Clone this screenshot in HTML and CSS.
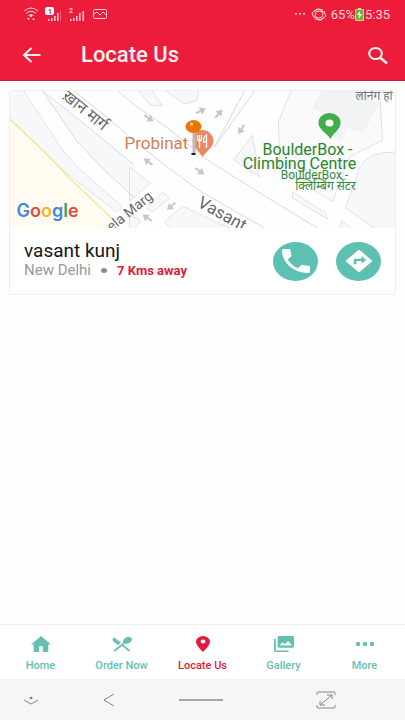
FILE: index.html
```html
<!DOCTYPE html>
<html lang="en">
<head>
<meta charset="utf-8">
<meta name="viewport" content="width=device-width, initial-scale=1">
<title>Locate Us</title>
<link rel="stylesheet" href="styles.css">
</head>
<body>
<header class="header">
  <div class="status">
    <div class="status-group status-left">
      <svg width="16" height="14" viewBox="0 0 16 14" fill="none" stroke="currentColor"><path d="M1 4Q8-2 15 4M3 6.500Q8 2 13 6.500M5.500 8.500Q8 6.500 10.500 8.500"/><path d="M8 8v2" stroke-width="2"/><path d="M4 11h3l-1.500 2zM9 13h3l-1.500-2z" fill="currentColor" stroke="none"/></svg>
      <svg width="18" height="15" viewBox="0 0 18 15"><path d="M3 12h1.500v2H3zM6 11h1.500v3H6zM9 9h1.500v5H9zM12 6h1.500v8H12z" fill="currentColor"/><path d="M15 4h1v10h-1z" fill="currentColor" opacity=".4"/><rect width="9" height="8" rx="2" fill="#fff"/><text class="sim sim-one" x="3" y="7">1</text></svg>
      <svg width="16" height="15" viewBox="0 0 16 15" fill="currentColor"><path d="M1 12h1.500v2H1zM4 11h1.500v3H4zM7 9h1.500v5H7zM10 6h1.500v8H10zM13.500 4H15v10h-1.500z"/><text class="sim" x="0" y="6">2</text></svg>
      <svg class="status-picture" width="14" height="10" viewBox="0 0 14 10" fill="none" stroke="currentColor"><rect x=".5" y=".5" width="13" height="9" rx="1"/><path d="M1 5l3-2 3 3 3-3 3 3"/></svg>
    </div>
    <div class="status-group">
      <svg class="status-dots" width="10" height="2" viewBox="0 0 10 2" fill="currentColor"><path d="M0 0h2v1.500H0zM4 0h2v1.500H4zM8 0h2v1.500H8z"/></svg>
      <svg class="status-eye" width="16" height="13" viewBox="0 0 16 13" fill="none" stroke="currentColor"><ellipse cx="8" cy="6.500" rx="4" ry="3.500"/><path d="M1 5l5-4 6 1M3 3l5-2 6 4M15 8l-5 4-6-1M13 10l-5 2-6-4M1 5l2 5M15 8l-2-5"/></svg>
      <span>65%</span>
      <svg width="9" height="13" viewBox="0 0 9 13"><rect x="3" width="3" height="2" fill="#ddd"/><rect x=".5" y="1.500" width="8" height="11" fill="#69b82f" stroke="#d8c5a2"/><path d="M5 3L2 7h2l-.5 4L7 6H5z" fill="#fff"/></svg>
      <span class="clock">5:35</span>
    </div>
  </div>
  <div class="toolbar">
    <button class="icon-button" type="button" aria-label="Back"><svg width="20" height="16" viewBox="0 0 20 16" fill="none" stroke="currentColor" stroke-width="2"><path d="M18.500 8H2M9.500 1L2 8l7.500 7"/></svg></button>
    <h1 class="title">Locate Us</h1>
    <button class="icon-button" type="button" aria-label="Search"><svg width="20" height="17" viewBox="0 0 20 17" fill="none" stroke="currentColor" stroke-width="2"><ellipse cx="7.500" cy="6.500" rx="6.300" ry="5.500"/><path d="M12 10.500l7 6" stroke-width="2.600"/></svg></button>
  </div>
</header>

<main class="content">
  <article class="card">
    <svg class="map" viewBox="0 0 386 137" preserveAspectRatio="xMidYMid slice" role="img" aria-label="Map of Vasant Kunj">
      <defs><path id="arrow" d="M-5-1H0V-4L6 0 0 4V1H-5z"/></defs>
      <rect width="386" height="137" fill="#fefefe"/>
      <path d="M0 28L57 84 110 137H0z" fill="#fffbf0"/>
      <g fill="#f6f8fa" stroke="#e0e2e4">
        <path d="M-2-2L14 0 53 59 70 78 113 116 107 121 57 82 35 61-2 25z"/>
        <path d="M33 0L60 21 125 74 125 106 94 78 68 51z" stroke="none"/>
        <path d="M125 74L155 96 125 106z" fill="#fefefe" stroke="none"/>
        <path d="M128-1L141 14 153 15 142-1zM155-1L175 13 188 9 189-1zM243 44L224 69 250 86zM120 76L141 92 125 106 120 110zM137 117L153 101 160 107 143 121zM173 115L155 131 162 138H222zM120 124L131 130 125 138H120z"/>
        <path d="M282-2L269 31 270 77 323 111 340 66 373 49 370-2z" fill="#fafafb"/>
        <path d="M313-1L304 17 318 25 311 37 331 50 337 36 354 40 369 12 354 7 358-1z" stroke="#f0f0f0" fill="#f2f3f4"/>
        <path d="M387 61Q358 60 350 77L336 117 366 138H387zM283 101L316 122 318 128 283 107zM332 130L343 138H330z"/>
      </g>
      <path d="M0 28L35 61 57 84 103 128" fill="none" stroke="#eee99b" stroke-width="1.500"/>
      <g fill="none" stroke="#d9d9d6">
        <path d="M108 0L125 14 158 37 198 69 260 108 308 137M65 0L97 26 125 50 155 74 192 101 255 137"/>
        <path d="M33 0L68 51 94 78 125 107M33 0L60 21 125 74M245 0L205 56M235 0L205 56"/>
      </g>
      <g fill="#c3c6d4">
        <use href="#arrow" transform="translate(191 20) rotate(-25)"/>
        <use href="#arrow" transform="translate(209 23) rotate(-50)"/>
        <use href="#arrow" transform="translate(232 38) rotate(125)"/>
        <use href="#arrow" transform="translate(139 27) rotate(35)"/>
        <use href="#arrow" transform="translate(139 71) rotate(215)"/>
        <use href="#arrow" transform="translate(190 80) rotate(35)"/>
        <use href="#arrow" transform="translate(162 115) rotate(140)"/>
        <use href="#arrow" transform="translate(138 127) rotate(215)"/>
      </g>
      <text class="road road-hindi" transform="translate(52 7) rotate(39)">ख़ान मार्ग</text>
      <text class="road" transform="translate(102 141) rotate(-39)">ela Marg</text>
      <text class="road road-large" transform="translate(187 115) rotate(29)">Vasant</text>
      <text class="poi poi-food" x="115" y="58">Probinat</text>
      <path d="M193 39a11 11 0 0 1 11 11c0 6-7 10-11 16-3-6-10-10-10-16a10 11 0 0 1 10-11z" fill="#e98861"/>
      <path d="M188 44v4q0 2 2 2v7M190 44v6M192 44v4q0 2-2 2M197 57V44q-3 1-3 7h3" fill="none" stroke="#fff" stroke-width="1.300"/>
      <path d="M183 40h3v24h-3z" fill="#bcbcbc"/><path d="M182 62h4v2h-4z" fill="#222"/>
      <ellipse cx="184" cy="35.500" rx="8" ry="6.500" fill="#e87605"/><circle cx="182" cy="33" r="1.500" fill="#ffdca9"/>
      <path d="M320 22a11 9.500 0 0 1 11 10c0 7-8 10-10 16-3-6-12-9-12-16a11 9.500 0 0 1 11-10z" fill="#42ad49"/><ellipse cx="320" cy="32" rx="4" ry="3.500" fill="#fff"/>
      <g class="poi poi-park" text-anchor="middle"><text x="298" y="64">BoulderBox -</text><text x="290" y="78">Climbing Centre</text></g>
      <g class="poi poi-local" text-anchor="middle"><text x="305" y="88">BoulderBox -</text><text x="316" y="99">क्लिम्बिंग सेंटर</text></g>
      <text class="poi poi-hotel" x="346" y="9">लर्निंग हो</text>
      <text class="google" x="7" y="126"><tspan fill="#4285e8">G</tspan><tspan fill="#df4b3d">o</tspan><tspan fill="#edb820">o</tspan><tspan fill="#4285e8">g</tspan><tspan fill="#35a454">l</tspan><tspan fill="#df4b3d">e</tspan></text>
    </svg>
    <div class="details">
      <div class="place">
        <h2 class="name">vasant kunj</h2>
        <p class="meta"><span>New Delhi</span><i class="dot"></i><strong class="distance">7 Kms away</strong></p>
      </div>
      <button class="action" type="button" aria-label="Call"><svg width="28" height="24" viewBox="3 3 18 18" preserveAspectRatio="none" fill="currentColor"><path d="M6.620 10.790c1.440 2.830 3.760 5.140 6.590 6.590l2.200-2.200c.27-.27.67-.36 1.020-.24 1.120.37 2.330.57 3.570.57.550 0 1 .45 1 1V20c0 .55-.45 1-1 1C10.610 21 3 13.390 3 4c0-.55.45-1 1-1h3.500c.55 0 1 .45 1 1 0 1.250.2 2.450.57 3.570.11.35.03.74-.25 1.020z"/></svg></button>
      <button class="action" type="button" aria-label="Directions"><svg width="26" height="22" viewBox="2 2 20 20" preserveAspectRatio="none" fill="currentColor"><path d="M21.700 11.300l-9-9a1 1 0 0 0-1.400 0l-9 9a1 1 0 0 0 0 1.400l9 9a1 1 0 0 0 1.400 0l9-9a1 1 0 0 0 0-1.400zM14 14.500V12h-4v3H8v-4c0-.55.45-1 1-1h5V7.500l3.500 3.500z"/></svg></button>
    </div>
  </article>
</main>

<nav class="tabs" aria-label="Main">
  <a class="tab" href="#home"><svg width="20" height="16" viewBox="1 3 22 17" preserveAspectRatio="none" fill="currentColor"><path d="M10 20v-6h4v6h6v-8h3L12 3 1 12h3v8z"/></svg>Home</a>
  <a class="tab" href="#order"><svg width="20" height="16" viewBox="2 2 20 20" preserveAspectRatio="none" fill="currentColor"><path d="M8.100 13.340l2.830-2.830L3.910 3.500a4 4 0 0 0 0 5.660zM14.880 11.530c1.530.71 3.680.21 5.270-1.380 1.910-1.910 2.280-4.650.81-6.120-1.460-1.460-4.200-1.100-6.120.81-1.590 1.590-2.090 3.740-1.380 5.270L3.700 19.870l1.410 1.410L12 14.410l6.880 6.880 1.410-1.410L13.410 13z"/></svg>Order Now</a>
  <a class="tab tab-current" href="#locate" aria-current="page"><svg width="14" height="16" viewBox="5 2 14 20" preserveAspectRatio="none" fill="currentColor"><path d="M12 2a7 7 0 0 0-7 7c0 5.250 7 13 7 13s7-7.750 7-13a7 7 0 0 0-7-7zm0 9.500a2.500 2.500 0 1 1 0-5 2.500 2.500 0 0 1 0 5z"/></svg>Locate Us</a>
  <a class="tab" href="#gallery"><svg width="20" height="16" viewBox="1 1 22 22" preserveAspectRatio="none" fill="currentColor"><path d="M1 5h2v16h14v2H3a2 2 0 0 1-2-2zM7 1h14a2 2 0 0 1 2 2v12a2 2 0 0 1-2 2H7a2 2 0 0 1-2-2V3a2 2 0 0 1 2-2zm0 13h14l-4.500-6-3.500 4.500L10.500 9.500z"/></svg>Gallery</a>
  <a class="tab" href="#more"><svg width="20" height="16" viewBox="0 0 20 16" fill="currentColor"><circle cx="3" cy="8" r="2.200"/><circle cx="10" cy="8" r="2.200"/><circle cx="17" cy="8" r="2.200"/></svg>More</a>
</nav>

<footer class="system">
  <svg width="16" height="12" viewBox="0 0 16 12" fill="none" stroke="currentColor"><path d="M1 6l7 4 7-4"/><ellipse cx="8" cy="4" rx="1.500" ry="1.200" fill="currentColor" stroke="none"/></svg>
  <svg width="12" height="14" viewBox="0 0 12 14" fill="none" stroke="currentColor"><path d="M11 1L1 7l10 6"/></svg>
  <svg class="handle" width="46" height="4" viewBox="0 0 46 4" fill="none" stroke="currentColor" stroke-width="2"><path d="M1 2h44"/></svg>
  <svg class="expand" width="20" height="18" viewBox="0 0 20 18" fill="none" stroke="currentColor"><path d="M1 4V2q0-1 1-1h16q1 0 1 1v2M1 14v2q0 1 1 1h16q1 0 1-1v-2M4 14L16 4M11 4h5v4M4 10v4h5"/></svg>
</footer>
</body>
</html>
```
FILE: styles.css
```css
* { box-sizing: border-box; }

body {
  margin: 0;
  min-height: 100vh;
  display: flex;
  flex-direction: column;
  background: #fefefe;
  font-family: Roboto, "Noto Sans", sans-serif;
}

h1, h2, p { margin: 0; }
svg { display: block; flex: none; }

button {
  padding: 0;
  border: 0;
  background: none;
  color: inherit;
}

.header {
  background: #ed1c3a;
  border-bottom: 1px solid #cc2038;
  color: #fff0f2;
}

.status {
  display: flex;
  justify-content: space-between;
  align-items: center;
  height: 28px;
  padding: 0 15px 0 23px;
  font-size: 13px;
  color: #ffd3d9;
}

.status-group { display: flex; align-items: center; }
.status-left { gap: 6px; }
.status-picture { margin-left: 2px; }
.status-dots { margin-right: 6px; }
.status-eye { margin-right: 4px; }
.clock { margin-left: 1px; }
.sim { font-size: 7px; font-weight: 700; }
.sim-one { fill: #c01f37; }

.toolbar {
  display: flex;
  align-items: center;
  height: 52px;
  padding: 2px 17px 0 22px;
}

.title {
  flex: 1;
  margin-left: 39px;
  font-size: 22px;
  line-height: 28px;
  font-weight: 500;
}

.content { flex: 1; padding: 9px; }

.card {
  overflow: hidden;
  border: 1px solid #eeeeee;
  border-radius: 3px;
  background: #fff;
}

.map { width: 100%; height: 137px; }
.road { font-size: 14px; fill: #65686b; }
.road-hindi { font-size: 16px; }
.road-large { font-size: 17px; }
.poi { font-size: 16px; }
.poi-food { font-size: 17px; fill: #cf8059; }
.poi-park { fill: #28852c; }
.poi-local { font-size: 12px; fill: #398a3d; }
.poi-hotel { font-size: 12px; fill: #73777b; }
.google { font-family: Inter, sans-serif; font-size: 18px; font-weight: 600; }

.details {
  display: flex;
  align-items: center;
  gap: 18px;
  height: 66px;
  padding: 0 14px;
}

.place { flex: 1; padding-bottom: 2px; }

.name {
  font-size: 19px;
  line-height: 21px;
  font-weight: 400;
  color: #151515;
}

.meta {
  display: flex;
  align-items: center;
  font-size: 15px;
  line-height: 19px;
  color: #999;
}

.dot {
  width: 6px;
  height: 5px;
  margin: 0 10px;
  border-radius: 50%;
  background: #8b8b8b;
}

.distance { font-size: 13px; color: #db1c3b; }

.action {
  display: grid;
  place-items: center;
  width: 45px;
  height: 39px;
  border-radius: 50%;
  background: #5dc1b2;
  color: #fff;
}

.tabs {
  display: flex;
  height: 55px;
  border-top: 1px solid #f0f0f0;
  background: #fff;
}

.tab {
  flex: 1;
  display: flex;
  flex-direction: column;
  align-items: center;
  gap: 7px;
  padding-top: 11px;
  font-size: 11px;
  line-height: 14px;
  font-weight: 500;
  color: #65bfb1;
  text-decoration: none;
}

.tab-current { color: #df1c3c; }

.system {
  display: flex;
  justify-content: space-between;
  align-items: center;
  height: 41px;
  padding: 0 69px 0 23px;
  background: #f6f6f6;
  color: #858585;
}

.handle { color: #a6a6a6; }
.expand { margin-left: 28px; }
```
